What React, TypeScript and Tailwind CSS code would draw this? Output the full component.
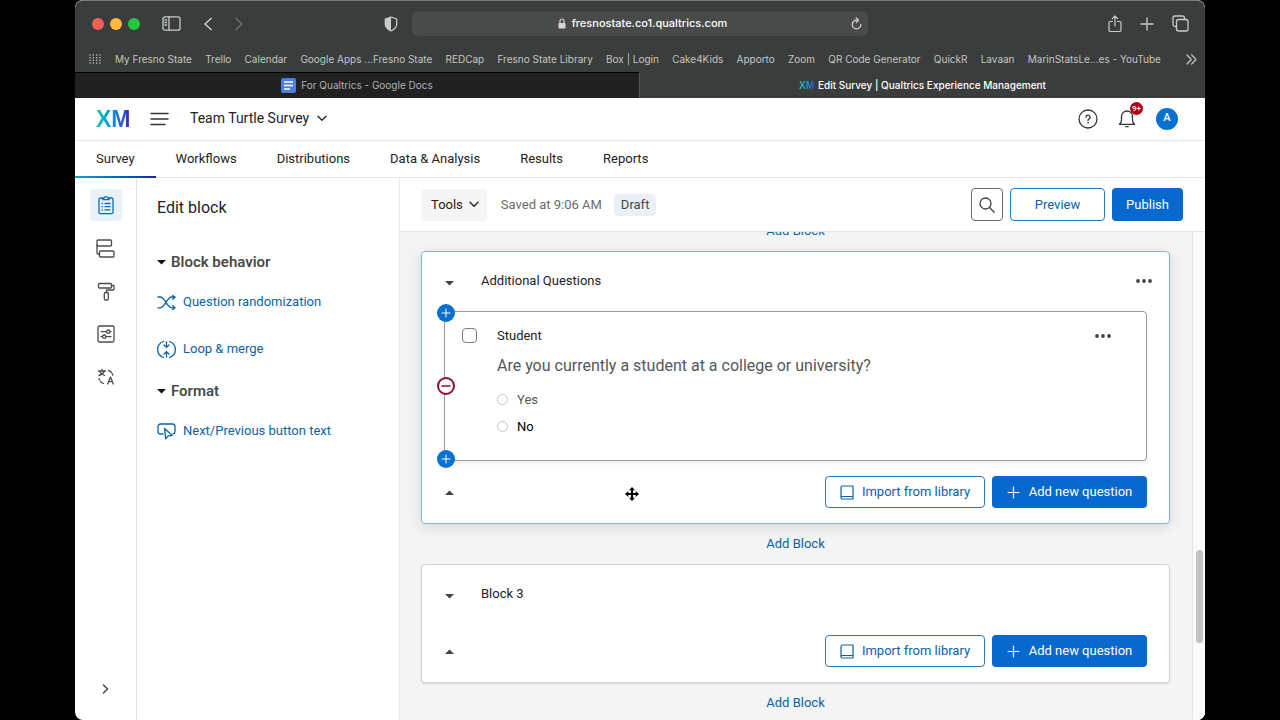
import React, { useState } from "react";

type SvgProps = { w: number; h: number; className?: string; children: React.ReactNode };

function Svg({ w, h, className = "", children }: SvgProps) {
  return (
    <svg
      width={w}
      height={h}
      viewBox={`0 0 ${w} ${h}`}
      fill="none"
      stroke="currentColor"
      strokeWidth="1.3"
      strokeLinecap="round"
      strokeLinejoin="round"
      aria-hidden="true"
      className={`shrink-0 ${className}`}
    >
      {children}
    </svg>
  );
}

const bookmarks = [
  "My Fresno State",
  "Trello",
  "Calendar",
  "Google Apps ...Fresno State",
  "REDCap",
  "Fresno State Library",
  "Box | Login",
  "Cake4Kids",
  "Apporto",
  "Zoom",
  "QR Code Generator",
  "QuickR",
  "Lavaan",
  "MarinStatsLe...es - YouTube",
];

function TitleBar() {
  return (
    <div className="grid h-[45px] grid-cols-[1fr_456px_1fr] items-center text-[#c9cbca]">
      <div className="flex items-center pl-[17px]">
        <div className="flex gap-[6px]">
          <span className="size-3 rounded-full bg-[#f65f57]" />
          <span className="size-3 rounded-full bg-[#fcb93d]" />
          <span className="size-3 rounded-full bg-[#24c840]" />
        </div>
        <button aria-label="Show sidebar" className="ml-[22px]">
          <Svg w={19} h={15}>
            <rect x="1" y="0.8" width="17" height="13.4" rx="2" />
            <path d="M7 1v13M3 4h1.6M3 6.5h1.6M3 9h1.6" />
          </Svg>
        </button>
        <button aria-label="Back" className="ml-[22px]">
          <Svg w={10} h={14}>
            <path d="M8.2 1.2 2 7l6.200 5.800" strokeWidth="1.5" />
          </Svg>
        </button>
        <button aria-label="Forward" className="ml-[21px] text-[#6c6f6e]">
          <Svg w={10} h={14}>
            <path d="M1.800 1.200 8 7l-6.200 5.800" strokeWidth="1.5" />
          </Svg>
        </button>
        <button aria-label="Privacy report" className="mr-[14px] ml-auto">
          <Svg w={14} h={16}>
            <path d="M7 1 12.700 3v5c0 3.200-2.200 5.400-5.700 7-3.500-1.600-5.700-3.800-5.700-7V3z" />
            <path d="M7 1v14c-3.500-1.600-5.700-3.800-5.700-7V3z" fill="currentColor" stroke="none" />
          </Svg>
        </button>
      </div>
      <div className="flex h-[25px] items-center rounded-md bg-[#484b4a] px-[6px]">
        <span className="w-4" />
        <div className="flex flex-1 items-center justify-center gap-[6px] text-[11px] font-medium text-white">
          <Svg w={8} h={11} className="text-[#d5d6d5]">
            <rect x="0.500" y="5" width="7" height="5.500" rx="0.800" fill="currentColor" stroke="none" />
            <path d="M2 5V3a2 2 0 0 1 4 0v2" strokeWidth="1.200" />
          </Svg>
          fresnostate.co1.qualtrics.com
        </div>
        <button aria-label="Reload" className="text-[#d5d6d5]">
          <Svg w={11} h={13}>
            <path d="M5.500 3.200A4.300 4.300 0 1 0 9.800 7.500M5.200 1l2.400 2.200-2.400 2.300" strokeWidth="1.200" />
          </Svg>
        </button>
      </div>
      <div className="flex items-center justify-end gap-[18px] pr-4">
        <button aria-label="Share">
          <Svg w={14} h={18}>
            <path d="M4.500 6.500H2.200a1.200 1.200 0 0 0-1.200 1.200v7.600a1.200 1.200 0 0 0 1.200 1.200h9.600a1.200 1.200 0 0 0 1.200-1.200V7.700a1.200 1.200 0 0 0-1.200-1.200H9.500M7 11V1.200M4.300 3.700 7 1l2.700 2.700" strokeWidth="1.200" />
          </Svg>
        </button>
        <button aria-label="New tab">
          <Svg w={14} h={14}>
            <path d="M7 1v12M1 7h12" />
          </Svg>
        </button>
        <button aria-label="Tab overview">
          <Svg w={17} h={17}>
            <path d="M4.500 11.500H3a2 2 0 0 1-2-2V3a2 2 0 0 1 2-2h7.500a2 2 0 0 1 2 2v1.500" />
            <rect x="4.500" y="4.500" width="11.500" height="11.500" rx="2" />
          </Svg>
        </button>
      </div>
    </div>
  );
}

function BrowserChrome() {
  return (
    <div className="shrink-0 rounded-t-lg border-t border-[#747a77] bg-[#3a3d3c] font-['Inter',sans-serif]">
      <TitleBar />
      <nav aria-label="Bookmarks" className="flex h-[26px] items-center overflow-hidden pr-2 pl-[14px] text-[10px] whitespace-nowrap text-[#c3c6c4]">
        <Svg w={12} h={10} className="mr-[14px]">
          {[1, 3.7, 6.3, 9].map((y) => (
            <path key={y} d={`M1 ${y}h10`} strokeDasharray="0.010 3.300" strokeWidth="1.500" />
          ))}
        </Svg>
        <div className="flex flex-1 justify-between">
          {bookmarks.map((b) => (
            <a key={b} href="#">
              {b}
            </a>
          ))}
        </div>
        <button aria-label="More bookmarks" className="ml-[25px]">
          <Svg w={11} h={11}>
            <path d="m1 1 4.300 4.500L1 10M5.700 1 10 5.500 5.700 10" strokeWidth="1.200" />
          </Svg>
        </button>
      </nav>
      <div className="grid h-[26px] grid-cols-2 text-[10px]">
        <a href="#" className="flex items-center justify-center gap-[5px] border-t border-r border-black border-r-[#555857] bg-[#212121] text-[#b0b2b1]">
          <svg width="15" height="15" viewBox="0 0 15 15" aria-hidden="true">
            <rect width="15" height="15" rx="2" fill="#4a80e0" />
            <path d="M3 4h9M3 7.500h9M3 11h6" stroke="#fff" strokeWidth="1.600" />
          </svg>
          For Qualtrics - Google Docs
        </a>
        <a href="#" className="flex items-center justify-center gap-1 font-medium text-white">
          <span aria-hidden="true" className="bg-gradient-to-r from-[#2bc9a8] via-[#159fe0] to-[#3355d8] bg-clip-text font-['Liberation_Sans',sans-serif] text-[10px] font-bold text-transparent">
            XM
          </span>
          Edit Survey | Qualtrics Experience Management
        </a>
      </div>
    </div>
  );
}

function AppHeader() {
  return (
    <header className="flex h-[43px] shrink-0 items-center border-b border-[#e6e6e6] bg-white pr-[27px] pb-px pl-[21px]">
      <a href="#" aria-label="XM home" className="w-[34px] bg-gradient-to-r from-[#22c7a3] via-[#0e8fe0] to-[#3412c8] bg-clip-text font-['Liberation_Sans',sans-serif] text-[23px] leading-7 font-bold text-transparent">
        XM
      </a>
      <button aria-label="Menu" className="ml-5 text-[#32363a]">
        <Svg w={19} h={14}>
          <path d="M1 1.500h17M1 7h17M1 12.500h14" strokeWidth="1.500" />
        </Svg>
      </button>
      <button className="ml-[21px] flex items-center gap-[8px] text-[14px] text-[#222]">
        Team Turtle Survey
        <Svg w={10} h={7}>
          <path d="m1 1.200 4 4 4-4" />
        </Svg>
      </button>
      <div className="ml-auto flex items-center gap-5">
        <button aria-label="Help" className="text-[#32363a]">
          <Svg w={20} h={20}>
            <circle cx="10" cy="10" r="9" />
            <path d="M8 8.200a2.050 2.050 0 1 1 2.900 1.900c-.6.300-.9.700-.9 1.500" />
            <circle cx="10" cy="13.700" r="0.500" fill="currentColor" strokeWidth="0.600" />
          </Svg>
        </button>
        <button aria-label="Notifications" className="relative text-[#32363a]">
          <Svg w={18} h={19}>
            <path d="M1.500 15.300h15c-1.500-1.300-2-2.600-2-4.300V7.500a5.500 5.500 0 0 0-11 0V11c0 1.700-.5 3-2 4.300zM7.800 17.700h2.400" />
          </Svg>
          <span className="absolute -top-[7px] left-3 grid size-[13px] place-items-center rounded-full bg-[#b00010] text-[8px] leading-none font-medium text-white">
            9+
          </span>
        </button>
        <button aria-label="Account" className="grid size-[22px] place-items-center rounded-full bg-[#0870d0] text-[11px] font-medium text-white">
          A
        </button>
      </div>
    </header>
  );
}

function NavTabs() {
  const tabs = ["Survey", "Workflows", "Distributions", "Data & Analysis", "Results", "Reports"];
  return (
    <nav aria-label="Project" className="flex h-[37px] shrink-0 border-b border-[#e6e6e6] bg-white text-[13px] text-[#222]">
      {tabs.map((t, i) => (
        <a key={t} href="#" className="relative flex items-center px-5 first:px-[21px]">
          {t}
          {i === 0 && <span className="absolute inset-x-0 -bottom-px h-[2px] bg-gradient-to-r from-[#16a8bd] to-[#1c1fa0]" />}
        </a>
      ))}
    </nav>
  );
}

function Rail() {
  return (
    <nav aria-label="Survey tools" className="flex w-[62px] shrink-0 flex-col items-center gap-[11px] border-r border-[#e3e3e3] pt-[11px] pb-[22px] text-[#4a4c4e]">
      <button aria-label="Builder" className="grid size-8 place-items-center rounded bg-[#e9f2fa] text-[#0a6ab8]">
        <Svg w={16} h={20}>
          <path d="M5 3H2.500A1.500 1.500 0 0 0 1 4.500v12.700a1.500 1.500 0 0 0 1.500 1.500h11a1.500 1.500 0 0 0 1.500-1.500V4.500A1.500 1.500 0 0 0 13.500 3H11M4.800 4.700V3h1.400a1.900 1.900 0 0 1 3.600 0h1.400v1.700z" />
          <path d="M4 8.500h.5M7 8.500h5M4 11.700h.5M7 11.700h5M4 14.900h.5M7 14.900h5" />
        </Svg>
      </button>
      <button aria-label="Survey flow" className="grid size-8 place-items-center">
        <Svg w={19} h={19}>
          <rect x="1" y="1" width="14.500" height="6" rx="1" />
          <rect x="3.500" y="12" width="14.500" height="6" rx="1" />
          <path d="M1 6v8a1 1 0 0 0 1 1h1.500" />
        </Svg>
      </button>
      <button aria-label="Look and feel" className="grid size-8 place-items-center">
        <Svg w={18} h={19}>
          <rect x="1.500" y="1.500" width="13" height="4.500" rx="1" />
          <path d="M14.500 3.500h1.700a.8.800 0 0 1 .8.800v2.900a.8.800 0 0 1-.8.800H9.500v2.500" />
          <rect x="7.300" y="10.500" width="4" height="7.500" rx="1.200" />
        </Svg>
      </button>
      <button aria-label="Survey options" className="grid size-8 place-items-center">
        <Svg w={18} h={18}>
          <rect x="1" y="1" width="16" height="16" rx="1.500" />
          <path d="M4.300 6.700h5.200M13.200 6.700h.8M4 11.700h1.300M9 11.700h5" />
          <circle cx="11.300" cy="6.700" r="1.700" />
          <circle cx="7.200" cy="11.700" r="1.700" />
        </Svg>
      </button>
      <button aria-label="Translations" className="grid size-8 place-items-center">
        <Svg w={18} h={18}>
          <path d="M1.500 3h7M5 1.500V3M2.500 3c1 2.300 2.800 3.800 5 4.500M7.500 3c-1 2.300-2.800 3.800-5.500 4.500" />
          <path d="m10.700 16 2.800-7 2.800 7M11.700 13.700h3.600" />
          <path d="M11.500 2.500c1.500.4 2.500 1.100 3.200 2.300M15.500 6l.3 1.200M2 10.500l.4 1.300M3.200 13.200c.8 1.200 1.700 1.800 3.300 2.300" />
        </Svg>
      </button>
      <button aria-label="Expand" className="mt-auto grid h-[18px] w-8 place-items-center">
        <Svg w={7} h={10}>
          <path d="m1.500 1 4 4-4 4" strokeWidth="1.600" />
        </Svg>
      </button>
    </nav>
  );
}

function Caret({ up = false, className = "" }: { up?: boolean; className?: string }) {
  return (
    <svg width="9" height="5" viewBox="0 0 9 5" aria-hidden="true" className={`shrink-0 ${className}`}>
      <path d={up ? "M0 5 4.500 0.500 9 5z" : "M0 0h9L4.500 4.500z"} fill="currentColor" />
    </svg>
  );
}

function PanelHeading({ children }: { children: React.ReactNode }) {
  return (
    <h3 className="text-[15px] leading-5 font-semibold text-[#4a4a4a]">
      <button className="flex items-center gap-[5px]">
        <Caret className="text-[#111]" />
        {children}
      </button>
    </h3>
  );
}

function PanelLink({ icon, children }: { icon: React.ReactNode; children: React.ReactNode }) {
  return (
    <a href="#" className="flex h-5 items-center gap-[7px] text-[13px] text-[#0b62a4]">
      {icon}
      {children}
    </a>
  );
}

function EditPanel() {
  return (
    <aside className="w-[263px] shrink-0 border-r border-[#e9e9e9] px-5 pt-5">
      <h2 className="text-[16px] leading-5 text-[#222]">Edit block</h2>
      <div className="mt-[34px] flex flex-col">
        <PanelHeading>Block behavior</PanelHeading>
        <div className="mt-5 flex flex-col gap-[27px]">
          <PanelLink
            icon={
              <Svg w={19} h={15}>
                <path d="M1 2h2.200c5 0 6.500 10.800 11.500 10.800H18M1 12.800h2.200c5 0 6.500-10.800 11.500-10.800H18M15.700 0.600 18 2.300l-2.300 2M15.700 10.700l2.300 2-2.300 1.800" />
              </Svg>
            }
          >
            Question randomization
          </PanelLink>
          <PanelLink
            icon={
              <Svg w={19} h={19}>
                <path d="M6.500 1.500a8.400 8.400 0 0 0 0 16M12.500 1.500a8.400 8.400 0 0 1 0 16" />
                <path d="M9.500 2v5M7 5l2.500 2.400L12 5M9.500 17v-5M7 14l2.500-2.400L12 14" />
              </Svg>
            }
          >
            Loop &amp; merge
          </PanelLink>
        </div>
        <div className="mt-[22px]">
          <PanelHeading>Format</PanelHeading>
        </div>
        <div className="mt-5">
          <PanelLink
            icon={
              <Svg w={19} h={17}>
                <path d="M6 11H3.500A2.500 2.500 0 0 1 1 8.500v-5A2.500 2.500 0 0 1 3.500 1h12A2.500 2.500 0 0 1 18 3.500v5a2.500 2.500 0 0 1-2 2.400" />
                <path d="m7.500 5.500 7.700 6.800-4 .5-2.500 3z" />
              </Svg>
            }
          >
            Next/Previous button text
          </PanelLink>
        </div>
      </div>
    </aside>
  );
}

function Toolbar() {
  return (
    <div className="flex h-[54px] shrink-0 items-center border-b border-[#e6e6e6] bg-white pr-[22px] pl-[21px] text-[13px]">
      <button className="flex h-8 items-center gap-[6px] rounded bg-[#f5f5f5] pr-2 pl-[10px] text-[#222]">
        Tools
        <Svg w={10} h={7}>
          <path d="m1 1.200 4 4 4-4" />
        </Svg>
      </button>
      <span className="ml-[14px] text-[#6a6c6e]">Saved at 9:06 AM</span>
      <span className="ml-3 rounded-sm bg-[#e9f1f7] px-[7px] leading-[22px] text-[#44494d]">Draft</span>
      <div className="ml-auto flex gap-[7px] font-medium">
        <button aria-label="Search" className="grid h-[33px] w-8 place-items-center rounded border border-[#6a6c6e] text-[#404244]">
          <Svg w={16} h={16}>
            <circle cx="6.500" cy="6.500" r="5.500" />
            <path d="m10.500 10.500 4.700 4.700" />
          </Svg>
        </button>
        <button className="w-[95px] rounded border border-[#2c7ab8] font-normal text-[#0b62a4]">Preview</button>
        <button className="w-[71px] rounded bg-[#0768cd] font-normal text-white">Publish</button>
      </div>
    </div>
  );
}

function Dots() {
  return (
    <svg width="16" height="4" viewBox="0 0 16 4" fill="#404244" aria-hidden="true">
      <circle cx="2" cy="2" r="1.900" />
      <circle cx="8" cy="2" r="1.900" />
      <circle cx="14" cy="2" r="1.900" />
    </svg>
  );
}

function BlockHeader({ title, menu }: { title: string; menu?: boolean }) {
  return (
    <div className="flex h-[59px] items-center pb-[2px] text-[#404244]">
      <button aria-label={`Collapse ${title}`} className="pt-[6px]">
        <Caret />
      </button>
      <h3 className="ml-[27px] text-[13px] text-[#222]">{title}</h3>
      {menu && (
        <button aria-label="Block options" className="-mr-[6px] ml-auto">
          <Dots />
        </button>
      )}
    </div>
  );
}

function BlockFooter() {
  return (
    <div className="flex items-center text-[13px]">
      <button aria-label="Collapse block" className="text-[#404244]">
        <Caret up />
      </button>
      <button className="ml-auto flex h-8 w-[160px] items-center justify-center gap-2 rounded border border-[#2c7ab8] text-[#0b62a4]">
        <Svg w={14} h={15}>
          <path d="M13 11.500V1H2.500A1.500 1.500 0 0 0 1 2.500v10A1.500 1.500 0 0 0 2.500 14H13v-2.500H2.500c-1 0-1.500.5-1.500 1.200" strokeWidth="1.200" />
        </Svg>
        Import from library
      </button>
      <button className="ml-[7px] flex h-8 w-[155px] items-center justify-center gap-[9px] rounded bg-[#0768cd] text-white">
        <Svg w={13} h={13}>
          <path d="M6.500 1v11M1 6.500h11" strokeWidth="1.200" />
        </Svg>
        Add new question
      </button>
    </div>
  );
}

function AddBlock() {
  return (
    <div className="flex h-10 items-center justify-center">
      <button className="text-[13px] text-[#0b62a4]">Add Block</button>
    </div>
  );
}

function RoundAdd({ className }: { className: string }) {
  return (
    <button aria-label="Insert question" className={`absolute grid size-[18px] place-items-center rounded-full bg-[#0870d0] text-white ${className}`}>
      <Svg w={10} h={10}>
        <path d="M5 1v8M1 5h8" strokeWidth="1" />
      </Svg>
    </button>
  );
}

function Question() {
  const [answer, setAnswer] = useState("");
  const [picked, setPicked] = useState(false);
  return (
    <div className="relative -mx-px flex rounded border border-[#9a9a9a] bg-white pt-[15px] pr-[35px] pb-5 pl-[17px] shadow-[0_3px_6px_rgba(0,0,0,0.06)]">
      <RoundAdd className="-top-2 -left-2" />
      <button aria-label="Delete page break" className="absolute top-1/2 -left-2 grid size-[18px] -translate-y-1/2 place-items-center rounded-full border-2 border-[#8c1030] bg-white text-[#8c1030]">
        <Svg w={10} h={2}>
          <path d="M1 1h8" />
        </Svg>
      </button>
      <RoundAdd className="-bottom-2 -left-2" />
      <input
        type="checkbox"
        aria-label="Select question Student"
        checked={picked}
        onChange={() => setPicked(!picked)}
        className="mt-px size-[15px] shrink-0 appearance-none rounded border border-[#7c7e80] bg-white checked:bg-[#0768cd]"
      />
      <div className="ml-5 flex-1">
        <div className="flex h-[18px] items-center justify-between text-[13px] text-[#222]">
          Student
          <button aria-label="Question options">
            <Dots />
          </button>
        </div>
        <fieldset className="mt-[9px]">
          <legend className="text-[16px] leading-6 text-[#555759]">Are you currently a student at a college or university?</legend>
          <div className="mt-2 flex flex-col text-[13px]">
            {["Yes", "No"].map((o) => (
              <label key={o} className="flex h-[27px] items-center gap-[9px] text-[#555759] last:text-black">
                <input
                  type="radio"
                  name="student"
                  checked={answer === o}
                  onChange={() => setAnswer(o)}
                  className="size-[11px] appearance-none rounded-full border border-[#c4c4c4] bg-white checked:bg-[#0768cd]"
                />
                {o}
              </label>
            ))}
          </div>
        </fieldset>
      </div>
    </div>
  );
}

function Canvas() {
  return (
    <div className="flex min-h-0 flex-1 bg-[#f4f4f4]">
      <div className="flex-1 overflow-hidden pr-[22px] pl-[21px]">
        <div className="-mt-[21px]">
          <AddBlock />
        </div>
        <section className="relative rounded border border-[#7fb2e0] bg-white px-[23px] pb-[15px] shadow-[0_3px_14px_rgba(0,0,0,0.12)]">
          <BlockHeader title="Additional Questions" menu />
          <Question />
          <div className="-mr-px pt-[15px]">
            <BlockFooter />
          </div>
          <svg width="14" height="14" viewBox="0 0 14 14" aria-hidden="true" className="absolute bottom-[22px] left-[203px]">
            <path d="M7 0 10 3.300H8V6h2.700V4L14 7l-3.300 3V8H8v2.700h2L7 14l-3-3.300h2V8H3.300v2L0 7l3.300-3v2H6V3.300H4z" fill="#000" />
          </svg>
        </section>
        <AddBlock />
        <section className="rounded border border-[#d4d4d4] bg-white px-[23px] pb-[15px] shadow-[0_1px_2px_rgba(0,0,0,0.12)]">
          <BlockHeader title="Block 3" />
          <div className="-mr-px pt-[11px]">
            <BlockFooter />
          </div>
        </section>
        <AddBlock />
      </div>
      <div className="flex w-[13px] shrink-0 flex-col items-center border-l border-[#e6e6e6] bg-[#fafafa]">
        <span className="grow-[318]" />
        <span className="w-[7px] grow-[93] rounded-full bg-[#c1c1c1]" />
        <span className="grow-[77]" />
      </div>
    </div>
  );
}

export default function App() {
  return (
    <div className="flex h-screen bg-black px-[75px] font-['Roboto','Liberation_Sans',sans-serif]">
      <div className="flex min-w-0 flex-1 flex-col overflow-hidden rounded-lg bg-white">
        <BrowserChrome />
        <AppHeader />
        <NavTabs />
        <div className="flex min-h-0 flex-1">
          <Rail />
          <EditPanel />
          <main className="flex min-w-0 flex-1 flex-col">
            <Toolbar />
            <Canvas />
          </main>
        </div>
      </div>
    </div>
  );
}
